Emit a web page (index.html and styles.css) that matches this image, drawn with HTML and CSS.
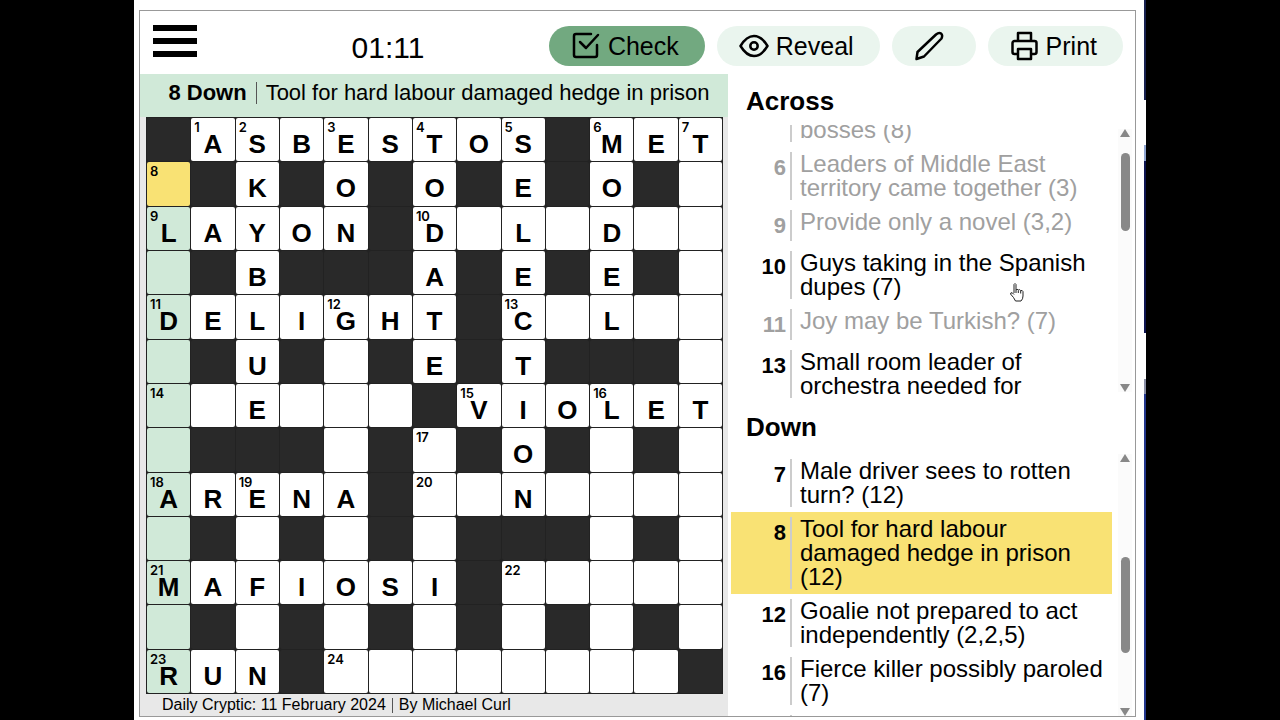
FILE: index.html
```html
<!DOCTYPE html>
<html lang="en">
<head>
<meta charset="utf-8">
<title>Daily Cryptic</title>
<link rel="stylesheet" href="styles.css">
</head>
<body>
<div class="page">
  <div class="window">
    <header class="toolbar">
      <button class="menu" type="button" aria-label="Menu"><span></span><span></span><span></span></button>
      <time class="timer">01:11</time>
      <div class="actions">
        <button class="pill active" type="button">
          <svg class="icon check" viewBox="0 0 30 28"><path d="M20 2H5a2 2 0 0 0-2 2v19a2 2 0 0 0 2 2h19a2 2 0 0 0 2-2V13M9 10l6 6L27 3"/></svg>Check</button>
        <button class="pill" type="button">
          <svg class="icon eye" viewBox="0 0 30 24"><path d="M1.500 12C6 4.500 10 2 15 2s9 2.500 13.500 10C24 19.500 20 22 15 22S6 19.500 1.500 12z"/><circle cx="15" cy="12" r="3.700"/></svg>Reveal</button>
        <button class="pill" type="button" aria-label="Pencil">
          <svg class="icon pencil" viewBox="0 0 36 30"><path d="M2.500 28l1-7L22 3.500q3-2.500 5-1t.500 5L10 25.500z"/></svg></button>
        <button class="pill" type="button">
          <svg class="icon printer" viewBox="0 0 29 30"><path d="M8 10V2h13v8M8 23H4.500a2 2 0 0 1-2-2V12a2 2 0 0 1 2-2h20a2 2 0 0 1 2 2v9a2 2 0 0 1-2 2H21M8 18h13v10H8z"/></svg>Print</button>
      </div>
    </header>
    <div class="columns">
      <section class="board">
        <div class="current"><strong>8 Down</strong><span class="rule"></span><span>Tool for hard labour damaged hedge in prison</span></div>
        <div class="grid" id="grid"></div>
        <footer class="credit"><span>Daily Cryptic: 11 February 2024</span><span class="rule"></span><span>By Michael Curl</span></footer>
      </section>
      <aside class="clues">
        <h2>Across</h2>
        <div class="panel across">
          <ol class="list from-end">
            <li class="done"><b></b><span>bosses (8)</span></li>
            <li class="done"><b>6</b><span>Leaders of Middle East territory came together (3)</span></li>
            <li class="done single"><b>9</b><span>Provide only a novel (3,2)</span></li>
            <li><b>10</b><span>Guys taking in the Spanish dupes (7)</span></li>
            <li class="done single"><b>11</b><span>Joy may be Turkish? (7)</span></li>
            <li><b>13</b><span>Small room leader of orchestra needed for</span></li>
          </ol>
          <div class="scroll"><i class="up"></i><div class="track"><i class="thumb high"></i></div><i class="down"></i></div>
        </div>
        <h2 class="second">Down</h2>
        <div class="panel lower">
          <ol class="list">
            <li><b>7</b><span>Male driver sees to rotten turn? (12)</span></li>
            <li class="selected"><b>8</b><span>Tool for hard labour damaged hedge in prison (12)</span></li>
            <li><b>12</b><span>Goalie not prepared to act independently (2,2,5)</span></li>
            <li><b>16</b><span>Fierce killer possibly paroled (7)</span></li>
            <li><b></b><span></span></li>
          </ol>
          <div class="scroll"><i class="up"></i><div class="track"><i class="thumb low"></i></div><i class="down"></i></div>
        </div>
      </aside>
    </div>
  </div>
  <svg class="hand" viewBox="0 0 16 20"><path d="M5 11V2.500q1-2 2 0V8q1-1.500 2.300 0 1.500-1 2.400.6 1.800-.6 2.300 1V14q0 3-2 5H6.500Q5 15.500 1.500 12q0-2 2-1L5 12.500M7 8v3M9.300 8.500V11M11.700 9v2.500"/></svg>
</div>
<script src="grid.js"></script>
</body>
</html>
```
FILE: styles.css
```css
* { box-sizing: border-box; }
body {
  margin: 0;
  background: #000;
  color: #000;
  font-family: "Liberation Sans", Arial, sans-serif;
}
button { border: 0; padding: 0; color: inherit; font: inherit; background: none; cursor: pointer; }
.page {
  position: relative;
  display: flex;
  min-height: 100vh;
  margin: 0 134px;
  padding: 10px 10px 3px 5px;
  background: #fff;
}
/* sliver of the desktop behind the window */
.page::after {
  content: "";
  position: absolute;
  top: 0;
  right: 0;
  bottom: 0;
  width: 2px;
  background: linear-gradient(#17214f 100px, #fff 100px 145px, #8fa5d0 145px 161px, #0d1450 161px 333px, #fff 333px 379px, #8a8fa5 379px 394px, #22368c 394px);
}
.window {
  display: flex;
  flex: 1;
  flex-direction: column;
  min-width: 0;
  border: 1px solid #999;
}
.toolbar {
  display: flex;
  align-items: center;
  justify-content: space-between;
  height: 63px;
  padding: 7px 12px 0 13px;
}
.menu { display: grid; gap: 7px; width: 44px; padding-bottom: 10px; }
.menu span { height: 6px; background: #000; }
.timer { margin-left: 30px; padding-top: 3px; font-size: 30px; line-height: 36px; }
.actions { display: flex; gap: 12px; }
.pill {
  display: flex;
  align-items: center;
  gap: 7px;
  height: 40px;
  padding: 0 26px 0 22px;
  border-radius: 20px;
  background: #eaf5ee;
  font-size: 25px;
}
.pill.active { background: #72a980; }
.icon { fill: none; stroke: #000; stroke-width: 2.5; stroke-linecap: round; stroke-linejoin: round; }
.check { width: 30px; height: 28px; }
.eye { width: 30px; height: 24px; }
.pencil { width: 36px; height: 30px; }
.printer { width: 29px; height: 30px; }
.columns { display: grid; grid-template-columns: 588fr 407fr; flex: 1; }
.board { display: flex; flex-direction: column; background: #e8e8e8; }
.rule { width: 1px; background: #555; }
.current {
  display: flex;
  align-items: center;
  justify-content: center;
  gap: 9px;
  height: 43px;
  padding: 0 16px 6px 26px;
  background: #d0e9d8;
  font-size: 22px;
  white-space: nowrap;
}
.current .rule { height: 22px; }
.grid {
  display: grid;
  grid-template-columns: repeat(13, 1fr);
  gap: 1px;
  margin: 0 5px 0 6px;
  padding: 1px;
  background: #222;
}
.cell {
  position: relative;
  display: grid;
  place-items: center;
  aspect-ratio: 1;
  padding-top: 9px;
  border-radius: 2px;
  background: #fff;
  font-size: 26px;
  line-height: 24px;
  font-weight: 700;
}
.cell.block { background: #292929; }
.cell.word { background: #d0e9d8; }
.cell.focus { background: #f9e274; }
.cell sup {
  position: absolute;
  top: 3px;
  left: 3px;
  font: 600 13px/13px Inter, sans-serif;
}
.credit { display: flex; align-items: center; gap: 6px; padding: 1px 22px; font-size: 16px; line-height: 20px; }
.credit .rule { height: 15px; }
.clues { display: flex; flex-direction: column; min-width: 0; padding-left: 3px; }
h2 { margin: 0; padding: 10px 15px 7px; font-size: 26px; line-height: 34px; }
.second { padding: 7px 15px 5px; }
.panel { display: flex; height: 278px; overflow: hidden; }
.panel.lower { flex: 1; height: auto; max-height: 267px; }
.list {
  display: flex;
  flex: 1;
  flex-direction: column;
  margin: 0;
  padding: 5px 0 0;
  list-style: none;
  font-size: 24px;
  line-height: 24px;
}
.list li { display: grid; grid-template-columns: 61px 1fr; flex: none; padding: 5px 0; }
.list b { min-height: 24px; padding: 4px 4px 0 0; border-right: 2px solid #ccc; font-size: 22px; line-height: 24px; text-align: right; }
.list span { padding-left: 8px; }
.list .done { color: #a0a0a0; }
.list .single b { min-height: 31px; }
.list .selected { background: #f9e274; }
.from-end { justify-content: flex-end; padding: 0; }
.scroll { display: flex; flex-direction: column; align-items: center; width: 14px; margin: 5px 3px 0 6px; background: #fbfbfb; }
.across .scroll { margin-top: 4px; margin-bottom: 11px; }
.up, .down { flex: none; width: 10px; height: 8px; background: #888; }
.up { clip-path: polygon(50% 0, 100% 100%, 0 100%); }
.down { clip-path: polygon(0 0, 100% 0, 50% 100%); }
.track { flex: 1; width: 9px; }
.thumb { display: block; border-radius: 5px; background: #888; }
.high { height: 78px; margin-top: 16px; }
.low { height: 96px; margin-top: 95px; }
.hand { position: absolute; top: 282px; left: 875px; width: 16px; height: 20px; fill: #fff; stroke: #222; stroke-width: 1; }
```
FILE: grid.js
```js
const rows = [
  "#ASBESTOS#MET",
  ".#K#O#O#E#O#.",
  "LAYON#D.L.D..",
  ".#B###A#E#E#.",
  "DELIGHT#C.L..",
  ".#U#.#E#T###.",
  "..E...#VIOLET",
  ".###.#.#O#.#.",
  "ARENA#..N....",
  ".#.#.#.###.#.",
  "MAFIOSI#.....",
  ".#.#.#.#.#.#.",
  "RUN#........#"
];
const numbers = {
  "0,1": 1, "0,2": 2, "0,4": 3, "0,6": 4, "0,8": 5, "0,10": 6, "0,12": 7,
  "1,0": 8, "2,0": 9, "2,6": 10, "4,0": 11, "4,4": 12, "4,8": 13,
  "6,0": 14, "6,7": 15, "6,10": 16, "7,6": 17, "8,0": 18, "8,2": 19, "8,6": 20,
  "10,0": 21, "10,8": 22, "12,0": 23, "12,4": 24
};
const grid = document.getElementById("grid");
rows.forEach((row, r) => [...row].forEach((ch, c) => {
  const cell = document.createElement("div");
  cell.className = "cell";
  if (ch === "#") cell.classList.add("block");
  else {
    if (c === 0) cell.classList.add(r === 1 ? "focus" : "word");
    const n = numbers[r + "," + c];
    if (n) {
      const sup = document.createElement("sup");
      sup.textContent = n;
      cell.append(sup);
    }
    if (ch !== ".") cell.append(ch);
  }
  grid.append(cell);
}));
```
